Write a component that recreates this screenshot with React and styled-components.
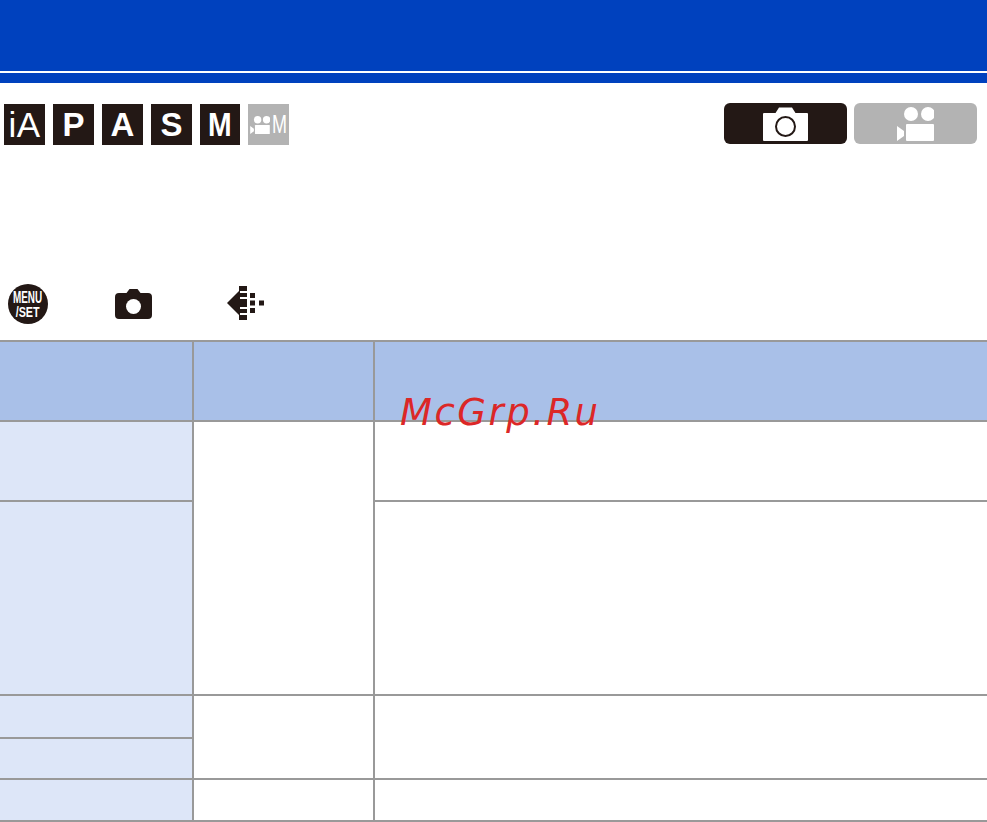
import styled, { createGlobalStyle } from "styled-components";

const GlobalStyle = createGlobalStyle`
  html, body {
    margin: 0;
    padding: 0;
    background: #fff;
    font-family: "Liberation Sans", Arial, sans-serif;
  }
`;

const Page = styled.div`
  position: relative;
  width: 987px;
  height: 822px;
  overflow: hidden;
`;

const Banner = styled.header`
  height: 71px;
  background: #0041be;
`;

const BannerStripe = styled.div`
  height: 10px;
  margin-top: 2px;
  background: #0041be;
`;

const ModeBar = styled.div`
  display: flex;
  justify-content: space-between;
  align-items: flex-start;
  padding: 21px 10px 0 4px;
  height: 180px;
`;

const Modes = styled.div`
  display: flex;
  gap: 8px;
`;

const Mode = styled.div`
  display: flex;
  align-items: center;
  justify-content: center;
  flex: none;
  width: ${props => props.$width || 41}px;
  height: 41px;
  color: #fff;
  background: ${props => (props.$muted ? "#b3b3b3" : "#231815")};
  font-size: 33px;
  font-weight: 700;
  line-height: 1;
  overflow: hidden;
`;

const ThinLabel = styled.span`
  font-size: 35px;
  font-weight: 400;
  letter-spacing: 0.5px;
`;

const NarrowM = styled.span`
  display: block;
  transform: scaleX(0.86);
`;

const MovieM = styled.span`
  display: block;
  width: 15px;
  margin-left: 2px;
  font-size: 25px;
  font-weight: 400;
  transform: scaleX(0.72);
  transform-origin: left center;
`;

const Capture = styled.div`
  display: flex;
  gap: 7px;
  margin-top: -1px;
`;

const CaptureButton = styled.div`
  display: flex;
  align-items: center;
  justify-content: center;
  width: 123px;
  height: 41px;
  border-radius: 6px;
  background: ${props => (props.$muted ? "#b3b3b3" : "#231815")};
`;

const MenuPath = styled.div`
  display: flex;
  align-items: center;
  height: 40px;
  padding-left: 8px;
  margin-bottom: 16px;
`;

const MenuKey = styled.div`
  display: flex;
  flex-direction: column;
  align-items: center;
  justify-content: center;
  width: 40px;
  height: 40px;
  border-radius: 50%;
  background: #231815;
  color: #fff;
  font-weight: 700;
`;

const KeyLine = styled.span`
  display: block;
  font-size: ${props => props.$size}px;
  line-height: ${props => props.$size - 1}px;
  transform: scaleX(${props => props.$squeeze});
  white-space: nowrap;
`;

const PathIcon = styled.div`
  display: flex;
  margin-left: ${props => props.$gap}px;
  margin-bottom: ${props => props.$lift || 0}px;
`;

const Table = styled.div`
  display: grid;
  grid-template-columns: 194px 181px 1fr;
  grid-template-rows: 80px 80px 194px 43px 41px 42px;
  border-top: 2px solid #999;
`;

const Cell = styled.div`
  border-bottom: 2px solid #999;
  border-right: ${props => (props.$last ? "none" : "2px solid #999")};
  background: ${props => props.$bg || "#fff"};
  grid-row: ${props => props.$row || "auto"};
  grid-column: ${props => props.$col || "auto"};
`;

const Watermark = styled.div`
  position: absolute;
  left: 400px;
  top: 389px;
  font-family: "DejaVu Sans", sans-serif;
  font-style: italic;
  font-size: 37px;
  line-height: 47px;
  letter-spacing: 2.5px;
  color: #dc2727;
  white-space: nowrap;
`;

const HEAD = "#a9c0e8";
const LABEL = "#dde6f8";

const CameraOutline = () => (
  <svg width="45" height="34" viewBox="0 0 45 34">
    <path
      fill="#fff"
      d="M1 6h11.5L16 .5h13L32.5 6H44a1 1 0 0 1 1 1v26a1 1 0 0 1-1 1H1a1 1 0 0 1-1-1V7a1 1 0 0 1 1-1z"
    />
    <circle cx="22.5" cy="19.5" r="9.5" fill="none" stroke="#231815" strokeWidth="2" />
  </svg>
);

const MovieCamera = ({ width, height }) => (
  <svg width={width} height={height} viewBox="0 0 37 34">
    <circle cx="14" cy="7" r="7" fill="#fff" />
    <circle cx="31" cy="7" r="7" fill="#fff" />
    <rect x="9" y="17" width="28" height="17" rx="1" fill="#fff" />
    <path d="M0 19l7 5v5l-7 5z" fill="#fff" />
  </svg>
);

const CameraSolid = () => (
  <svg width="37" height="30" viewBox="0 0 37 30">
    <path
      fill="#231815"
      d="M4 4h7.5l3-4h8l3 4H33a4 4 0 0 1 4 4v18a4 4 0 0 1-4 4H4a4 4 0 0 1-4-4V8a4 4 0 0 1 4-4z"
    />
    <circle cx="18.5" cy="17.5" r="7.5" fill="#fff" />
  </svg>
);

const QualityIcon = () => (
  <svg width="37" height="34" viewBox="0 0 37 34">
    <path fill="#231815" d="M0 17L13 4v26z" />
    <g fill="#231815">
      <rect x="12" y="0" width="8" height="5" />
      <rect x="12" y="7" width="8" height="4" />
      <rect x="12" y="13" width="8" height="8" />
      <rect x="12" y="23" width="8" height="4" />
      <rect x="12" y="29" width="8" height="5" />
      <rect x="23" y="7" width="5" height="5" />
      <rect x="23" y="14.5" width="5" height="5" />
      <rect x="23" y="22" width="5" height="5" />
      <rect x="32" y="14.5" width="5" height="5" />
    </g>
  </svg>
);

export default function App() {
  return (
    <Page>
      <GlobalStyle />
      <Banner />
      <BannerStripe />
      <ModeBar>
        <Modes>
          <Mode>
            <ThinLabel>iA</ThinLabel>
          </Mode>
          <Mode>P</Mode>
          <Mode>A</Mode>
          <Mode>S</Mode>
          <Mode $width={40}>
            <NarrowM>M</NarrowM>
          </Mode>
          <Mode $muted>
            <MovieCamera width={20} height={18} />
            <MovieM>M</MovieM>
          </Mode>
        </Modes>
        <Capture>
          <CaptureButton>
            <CameraOutline />
          </CaptureButton>
          <CaptureButton $muted>
            <MovieCamera width={37} height={34} />
          </CaptureButton>
        </Capture>
      </ModeBar>
      <MenuPath>
        <MenuKey>
          <KeyLine $size={16} $squeeze={0.62}>MENU</KeyLine>
          <KeyLine $size={15} $squeeze={0.72}>/SET</KeyLine>
        </MenuKey>
        <PathIcon $gap={67}>
          <CameraSolid />
        </PathIcon>
        <PathIcon $gap={75} $lift={2}>
          <QualityIcon />
        </PathIcon>
      </MenuPath>
      <Table>
        <Cell $bg={HEAD} />
        <Cell $bg={HEAD} />
        <Cell $bg={HEAD} $last />
        <Cell $bg={LABEL} />
        <Cell $row="2 / span 2" $col="2" />
        <Cell $last />
        <Cell $bg={LABEL} />
        <Cell $last />
        <Cell $bg={LABEL} />
        <Cell $row="4 / span 2" $col="2" />
        <Cell $row="4 / span 2" $col="3" $last />
        <Cell $bg={LABEL} />
        <Cell $bg={LABEL} />
        <Cell />
        <Cell $last />
      </Table>
      <Watermark>McGrp.Ru</Watermark>
    </Page>
  );
}
